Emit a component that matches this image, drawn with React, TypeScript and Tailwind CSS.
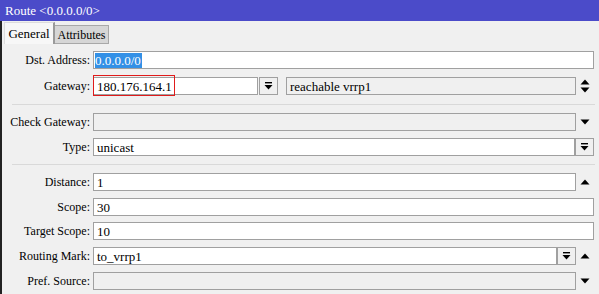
import React from 'react';

// drop-down button glyph: bar over a down triangle
function DropGlyph() {
  return (
    <svg width="9" height="8" viewBox="0 0 9 8">
      <rect x="1" y="0" width="7" height="1.4" fill="#000" />
      <path d="M0.5 3 H8.5 L4.5 7.5 Z" fill="#000" />
    </svg>
  );
}

function DropButton() {
  return (
    <div className="w-[19px] h-full border border-[#a0a0a0] bg-[#f0f0f0] flex items-center justify-center">
      <DropGlyph />
    </div>
  );
}

function Arrow({ kind }: { kind: 'up' | 'down' | 'both' }) {
  return (
    <div className="w-[18px] h-full flex items-center justify-center">
      {kind === 'up' && (
        <svg width="10" height="6" viewBox="0 0 10 6"><path d="M0.5 5.5 H9.5 L5 0.5 Z" fill="#000" /></svg>
      )}
      {kind === 'down' && (
        <svg width="10" height="6" viewBox="0 0 10 6"><path d="M0.5 0.5 H9.5 L5 5.5 Z" fill="#000" /></svg>
      )}
      {kind === 'both' && (
        <svg width="10" height="14" viewBox="0 0 10 14">
          <path d="M0.5 5.5 H9.5 L5 0.5 Z" fill="#000" />
          <path d="M0.5 8.5 H9.5 L5 13.5 Z" fill="#000" />
        </svg>
      )}
    </div>
  );
}

function Field({ value, disabled, className = '' }: { value?: string; disabled?: boolean; className?: string }) {
  return (
    <div
      className={`h-full border border-[#a0a0a0] flex items-center pl-[3px] text-[13px] text-black leading-none whitespace-nowrap ${disabled ? 'bg-[#f0f0f0]' : 'bg-white'} ${className}`}
    >
      {value}
    </div>
  );
}

function Row({ label, children, className = '' }: { label: string; children: React.ReactNode; className?: string }) {
  return (
    <div className={`flex h-[18px] items-stretch ${className}`}>
      <div className="w-[89px] shrink-0 flex items-center justify-end pr-[1px] text-[12px] text-black whitespace-nowrap">
        {label}
      </div>
      <div className="ml-[2px] flex-1 flex items-stretch mr-[5px]">{children}</div>
    </div>
  );
}

export default function App() {
  return (
    <div className="w-[599px] h-[294px] bg-[#f0f0f0] overflow-hidden font-['Liberation_Serif','Times_New_Roman',serif]">
      <div className="h-[21px] bg-[#4b4bc9] text-white text-[13px] flex items-center pl-[5px]">
        Route &lt;0.0.0.0/0&gt;
      </div>

      <div className="border-l-2 border-[#222] h-[273px]">
        {/* tabs */}
        <div className="h-[23px] flex items-end pl-[2px]">
          <div className="h-[22px] w-[51px] bg-[#f7f7f7] border-l border-t border-[#dcdcdc] border-r-2 border-r-[#9a9a9a] flex items-center justify-center text-[13px] text-black">
            General
          </div>
          <div className="h-[19px] w-[54px] bg-[#d6d6d6] border border-[#a8a8a8] border-l-0 flex items-center justify-center text-[12px] text-black">
            Attributes
          </div>
        </div>

        <div className="pt-[7px]">
          <Row label="Dst. Address:">
            <div className="flex-1 h-full border border-[#a0a0a0] bg-white flex items-center pl-[1px] text-[13px] leading-none">
              <span className="bg-[#3390e6] text-white h-[15px] flex items-center pr-[1px]">0.0.0.0/0</span>
            </div>
          </Row>

          <Row label="Gateway:" className="mt-[8px]">
            <div className="relative w-[165px]">
              <Field value="180.176.164.1" className="w-full" />
              <span className="absolute left-[0px] top-[-2px] w-[82px] h-[21px] border border-[#e01b1b]" />
            </div>
            <div className="ml-[1px]">
              <DropButton />
            </div>
            <Field value="reachable vrrp1" disabled className="ml-[8px] flex-1 text-[12px]" />
            <Arrow kind="both" />
          </Row>

          <div className="mt-[9px] ml-[10px] mr-[4px] h-[1px] bg-[#d9d9d9]" />

          <Row label="Check Gateway:" className="mt-[8px]">
            <Field disabled className="flex-1" />
            <Arrow kind="down" />
          </Row>

          <Row label="Type:" className="mt-[7px]">
            <Field value="unicast" className="flex-1" />
            <DropButton />
          </Row>

          <div className="mt-[8px] ml-[10px] mr-[4px] h-[1px] bg-[#d9d9d9]" />

          <Row label="Distance:" className="mt-[8px]">
            <Field value="1" className="flex-1" />
            <Arrow kind="up" />
          </Row>

          <Row label="Scope:" className="mt-[7px]">
            <Field value="30" className="flex-1" />
          </Row>

          <Row label="Target Scope:" className="mt-[6px]">
            <Field value="10" className="flex-1" />
          </Row>

          <Row label="Routing Mark:" className="mt-[7px]">
            <Field value="to_vrrp1" className="flex-1" />
            <DropButton />
            <Arrow kind="up" />
          </Row>

          <Row label="Pref. Source:" className="mt-[7px]">
            <Field disabled className="flex-1" />
            <Arrow kind="down" />
          </Row>
        </div>
      </div>
    </div>
  );
}
